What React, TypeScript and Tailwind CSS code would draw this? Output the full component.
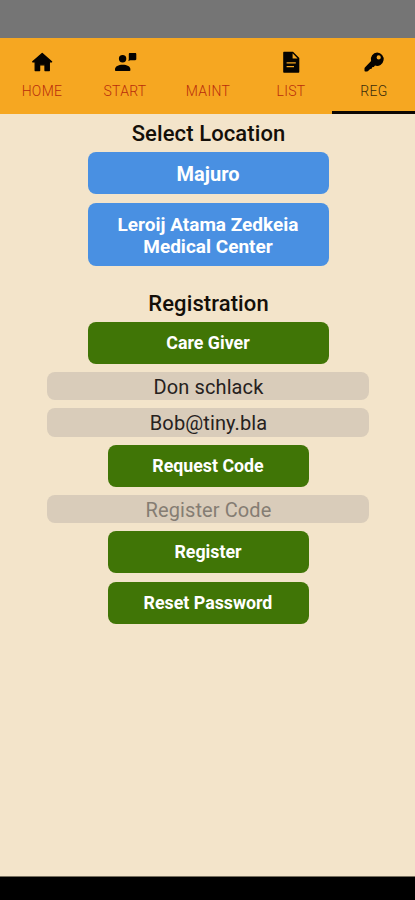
import React from "react";

const HomeIcon = () => (
  <svg width="24" height="24" viewBox="0 0 24 24" fill="#050301" stroke="#050301" strokeWidth="1.300" strokeLinejoin="round" className="block">
    <path d="M12.200 3.400 21.600 11.800H19.300v8.700H15v-5.700H9.600v5.700H5.200V11.800H2.700z" />
  </svg>
);

const StartIcon = () => (
  <svg width="24" height="24" viewBox="0 0 24 24" fill="#050301" className="block">
    <circle cx="9.600" cy="8.700" r="3.700" />
    <path d="M2 20.300v-.9c0-3.100 3.400-4.700 7.700-4.700s7.700 1.600 7.700 4.700v.9c0 .5-.3.800-.8.800H2.800c-.5 0-.8-.3-.8-.8z" />
    <path d="M15.800 4.200c0-.7.400-1.100 1.100-1.100h5.300c.7 0 1.100.4 1.100 1.100v4.900c0 .7-.4 1.100-1.100 1.100h-4.900l-2 .8.500-1.700z" />
  </svg>
);

const ListIcon = () => (
  <svg width="24" height="24" viewBox="0 0 24 24" fill="#050301" className="block">
    <path
      fillRule="evenodd"
      d="M5.200 1.700h8.800L20.300 8v13.800c0 .6-.4 1-1 1H5.200c-.6 0-1-.4-1-1V2.700c0-.6.400-1 1-1zM13.600 3.300v5.100h5zM7.600 12.200v1.300h9.200v-1.300zM7.600 15.900v1.300h7.400v-1.300z"
    />
  </svg>
);

const KeyIcon = () => (
  <svg width="24" height="24" viewBox="0 0 24 24" fill="#050301" className="block">
    <path
      fillRule="evenodd"
      d="M15.200 2.500a6.700 6.700 0 1 1-2.200 13.100l-1.200 1.400-1.700.2-.4 1.500-1.600.3-2 2c-.3.300-.6.500-1 .5H3.600c-.7 0-1.100-.4-1.100-1.100V18.500c0-.4.100-.7.400-1l6.200-6.500A6.700 6.700 0 0 1 15.200 2.500zM16.700 5.300a2.100 2.100 0 1 0 0 4.200 2.100 2.100 0 0 0 0-4.200z"
    />
  </svg>
);

type Tab = { label: string; icon: React.ReactNode; active?: boolean };

const tabs: Tab[] = [
  { label: "HOME", icon: <HomeIcon /> },
  { label: "START", icon: <StartIcon /> },
  { label: "MAINT", icon: null },
  { label: "LIST", icon: <ListIcon /> },
  { label: "REG", icon: <KeyIcon />, active: true },
];

const Action = ({ children, className }: { children: React.ReactNode; className: string }) => (
  <button
    className={`block rounded-lg text-center font-bold leading-[22px] text-white ${className}`}
  >
    {children}
  </button>
);

const field =
  "mt-2 block h-[28.500px] w-[322px] rounded-lg bg-[#d9ccba] pl-px pt-[2px] text-center text-[20px] leading-[26px] tracking-[0.1px] text-[#26211d] placeholder:text-[#857d73] placeholder:opacity-100";

export default function App() {
  return (
    <div className="flex h-[900px] w-full flex-col overflow-hidden bg-[#f3e4ca] font-['Roboto',sans-serif]">
      <div className="h-[38px] shrink-0 bg-[#757575]" />
      <nav className="grid h-[75.500px] shrink-0 grid-cols-5 bg-[#f6a721]">
        {tabs.map((tab) => (
          <div
            key={tab.label}
            className={`flex flex-col items-center border-b-[3px] pt-3 ${
              tab.active ? "border-[#0c0703] text-[#3a2d0c]" : "border-transparent text-[#b92d0c]"
            }`}
          >
            <div className="h-6">{tab.icon}</div>
            <span className="mt-[7px] pl-px text-[14px] font-[350] leading-5 tracking-[0.300px]">{tab.label}</span>
          </div>
        ))}
      </nav>
      <main className="flex grow flex-col items-center pl-px pt-[6.500px]">
        <h2 className="h-8 pl-px text-[22px] font-medium leading-[28px] tracking-[0.1px] text-[#140f09]">Select Location</h2>
        <Action className="h-[42px] w-[241px] bg-[#4990e2] pt-px text-[20px]">Majuro</Action>
        <Action className="mt-[8.500px] h-[63.500px] w-[241px] bg-[#4990e2] px-5 pt-[3px] text-[19px]">
          Leroij Atama Zedkeia Medical Center
        </Action>
        <h2 className="mt-6 h-[31.500px] pl-px text-[22px] font-medium leading-[28px] tracking-[0.1px] text-[#140f09]">
          Registration
        </h2>
        <Action className="h-[42px] w-[241px] bg-[#407506] text-[17.800px]">Care Giver</Action>
        <input className={field} defaultValue="Don schlack" />
        <input className={field} defaultValue="Bob@tiny.bla" />
        <Action className="mt-2 h-[42px] w-[201px] bg-[#407506] text-[17.800px]">Request Code</Action>
        <input className={field} placeholder="Register Code" />
        <Action className="mt-2 h-[42px] w-[201px] bg-[#407506] text-[17.800px]">Register</Action>
        <Action className="mt-[8.500px] h-[42px] w-[201px] bg-[#407506] text-[17.800px]">
          Reset Password
        </Action>
      </main>
      <div className="h-6 shrink-0 border-t border-[#77705f] bg-black" />
    </div>
  );
}
